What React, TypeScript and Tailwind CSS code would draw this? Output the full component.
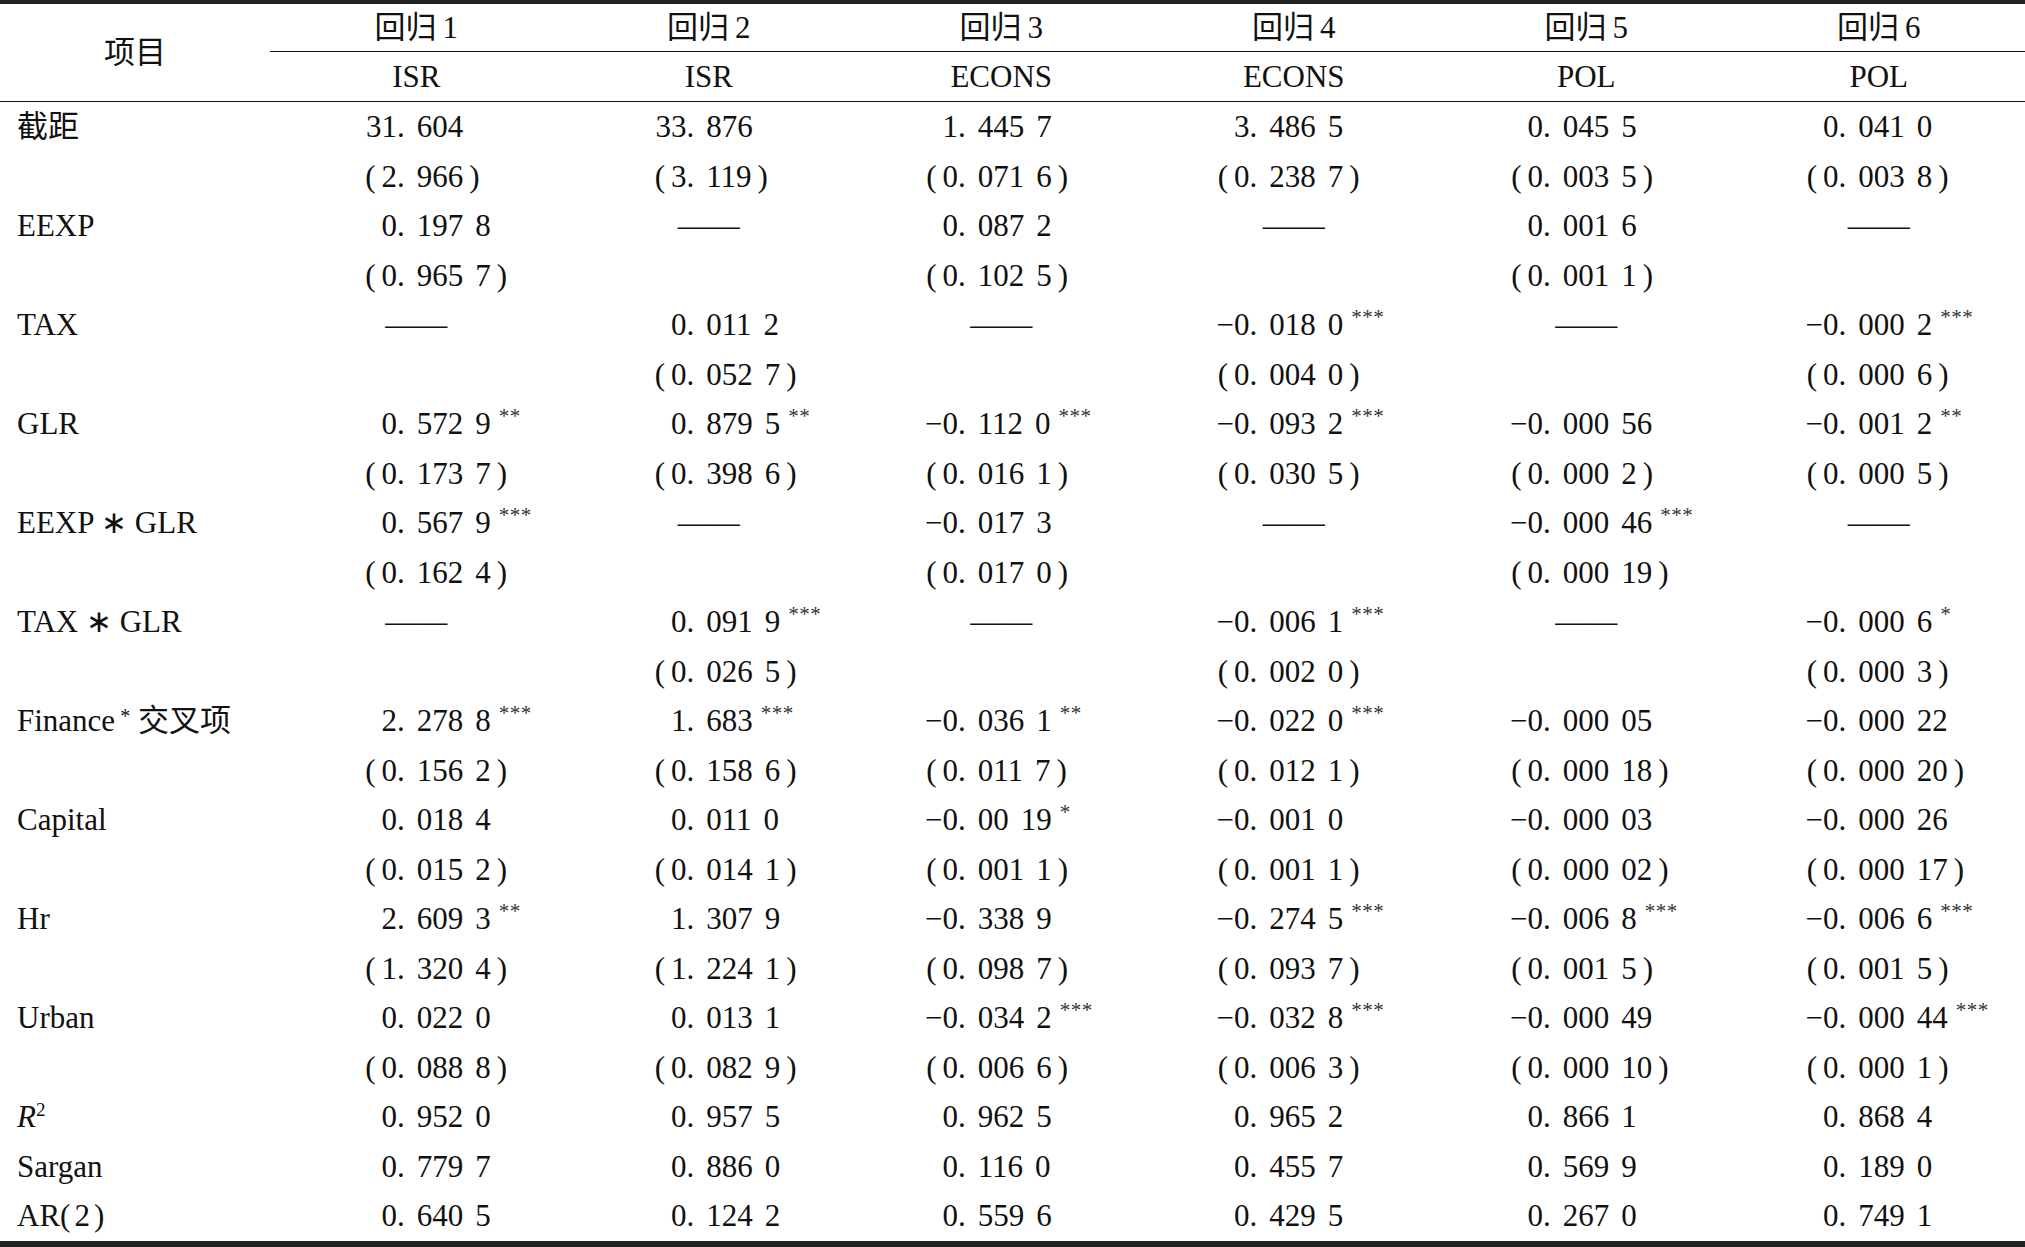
import React from 'react';

// decimal point position inside each value column (px from the column's left edge)
const decCols = ['w-[127px]', 'w-[124px]', 'w-[103px]', 'w-[102px]', 'w-[103px]', 'w-[106px]'];

type Row = { label: React.ReactNode; vals: string[]; paren?: boolean };

const rows: Row[] = [
  { label: '截距', vals: ['31. 604', '33. 876', '1. 445 7', '3. 486 5', '0. 045 5', '0. 041 0'] },
  { label: '', paren: true, vals: ['2. 966', '3. 119', '0. 071 6', '0. 238 7', '0. 003 5', '0. 003 8'] },
  { label: 'EEXP', vals: ['0. 197 8', '—', '0. 087 2', '—', '0. 001 6', '—'] },
  { label: '', paren: true, vals: ['0. 965 7', '', '0. 102 5', '', '0. 001 1', ''] },
  { label: 'TAX', vals: ['—', '0. 011 2', '—', '−0. 018 0***', '—', '−0. 000 2***'] },
  { label: '', paren: true, vals: ['', '0. 052 7', '', '0. 004 0', '', '0. 000 6'] },
  { label: 'GLR', vals: ['0. 572 9**', '0. 879 5**', '−0. 112 0***', '−0. 093 2***', '−0. 000 56', '−0. 001 2**'] },
  { label: '', paren: true, vals: ['0. 173 7', '0. 398 6', '0. 016 1', '0. 030 5', '0. 000 2', '0. 000 5'] },
  { label: 'EEXP ∗ GLR', vals: ['0. 567 9***', '—', '−0. 017 3', '—', '−0. 000 46***', '—'] },
  { label: '', paren: true, vals: ['0. 162 4', '', '0. 017 0', '', '0. 000 19', ''] },
  { label: 'TAX ∗ GLR', vals: ['—', '0. 091 9***', '—', '−0. 006 1***', '—', '−0. 000 6*'] },
  { label: '', paren: true, vals: ['', '0. 026 5', '', '0. 002 0', '', '0. 000 3'] },
  {
    label: (
      <>
        Finance<span className="relative top-[-8px] ml-[5px] text-[20px]">*</span> 交叉项
      </>
    ),
    vals: ['2. 278 8***', '1. 683***', '−0. 036 1**', '−0. 022 0***', '−0. 000 05', '−0. 000 22'],
  },
  { label: '', paren: true, vals: ['0. 156 2', '0. 158 6', '0. 011 7', '0. 012 1', '0. 000 18', '0. 000 20'] },
  { label: 'Capital', vals: ['0. 018 4', '0. 011 0', '−0. 00 19*', '−0. 001 0', '−0. 000 03', '−0. 000 26'] },
  { label: '', paren: true, vals: ['0. 015 2', '0. 014 1', '0. 001 1', '0. 001 1', '0. 000 02', '0. 000 17'] },
  { label: 'Hr', vals: ['2. 609 3**', '1. 307 9', '−0. 338 9', '−0. 274 5***', '−0. 006 8***', '−0. 006 6***'] },
  { label: '', paren: true, vals: ['1. 320 4', '1. 224 1', '0. 098 7', '0. 093 7', '0. 001 5', '0. 001 5'] },
  { label: 'Urban', vals: ['0. 022 0', '0. 013 1', '−0. 034 2***', '−0. 032 8***', '−0. 000 49', '−0. 000 44***'] },
  { label: '', paren: true, vals: ['0. 088 8', '0. 082 9', '0. 006 6', '0. 006 3', '0. 000 10', '0. 000 1'] },
  {
    label: (
      <>
        <i>R</i>
        <span className="relative top-[-11px] text-[19px]">2</span>
      </>
    ),
    vals: ['0. 952 0', '0. 957 5', '0. 962 5', '0. 965 2', '0. 866 1', '0. 868 4'],
  },
  { label: 'Sargan', vals: ['0. 779 7', '0. 886 0', '0. 116 0', '0. 455 7', '0. 569 9', '0. 189 0'] },
  {
    label: (
      <>
        AR(<span className="ml-[4px]">2</span>
        <span className="ml-[4px]">)</span>
      </>
    ),
    vals: ['0. 640 5', '0. 124 2', '0. 559 6', '0. 429 5', '0. 267 0', '0. 749 1'],
  },
];

const Value = ({ raw, paren, ci }: { raw: string; paren?: boolean; ci: number }) => {
  if (!raw) return <div />;
  if (raw === '—') {
    return <div className="flex items-center justify-center">——</div>;
  }
  const m = raw.match(/^([^*]+?)(\**)$/);
  const num = m ? m[1] : raw;
  const star = m ? m[2] : '';
  const [ip, rest] = num.split('.');
  const groups = rest.trim().split(' ');

  return (
    <div className="flex items-center">
      <div className={`${decCols[ci]} shrink-0 flex justify-end`}>
        {paren && <span className="mr-[6px]">(</span>}
        <span>{ip}</span>
      </div>
      <div className="relative flex">
        <span>.</span>
        {groups.map((g, i) => (
          <React.Fragment key={i}>
            <span className="inline-block w-[12px]" />
            <span>{g}</span>
          </React.Fragment>
        ))}
        {paren && <span className="ml-[6px]">)</span>}
        {star && (
          <span className="absolute left-full top-[-2px] pl-[8px] text-[21px] tracking-[0.5px] text-[#333]">{star}</span>
        )}
      </div>
    </div>
  );
};

export default function App() {
  return (
    <div className="w-[2025px] h-[1247px] overflow-hidden bg-white text-[#111] text-[31px] leading-none font-['Liberation_Serif','Noto_Sans_CJK_SC',serif]">
      <div className="border-t-4 border-[#222]">
        {/* header */}
        <div className="grid grid-cols-[270px_1fr]">
          <div className="flex items-center justify-center">项目</div>
          <div className="flex flex-col">
            <div className="grid grid-cols-6 h-[47px] items-center text-center">
              {[1, 2, 3, 4, 5, 6].map((n) => (
                <div key={n}>
                  回归<span className="ml-[6px]">{n}</span>
                </div>
              ))}
            </div>
            <div className="h-px bg-[#111]" />
            <div className="grid grid-cols-6 h-[49px] items-center text-center">
              {['ISR', 'ISR', 'ECONS', 'ECONS', 'POL', 'POL'].map((t, i) => (
                <div key={i}>{t}</div>
              ))}
            </div>
          </div>
        </div>
        <div className="h-px bg-[#111]" />

        {/* body */}
        {rows.map((r, ri) => (
          <div key={ri} className="grid grid-cols-[270px_repeat(6,1fr)] h-[49.5px] items-center">
            <div className="pl-[17px] whitespace-nowrap">{r.label}</div>
            {r.vals.map((v, ci) => (
              <Value key={ci} raw={v} paren={r.paren} ci={ci} />
            ))}
          </div>
        ))}
        <div className="h-[8px] bg-[#222]" />
      </div>
    </div>
  );
}
